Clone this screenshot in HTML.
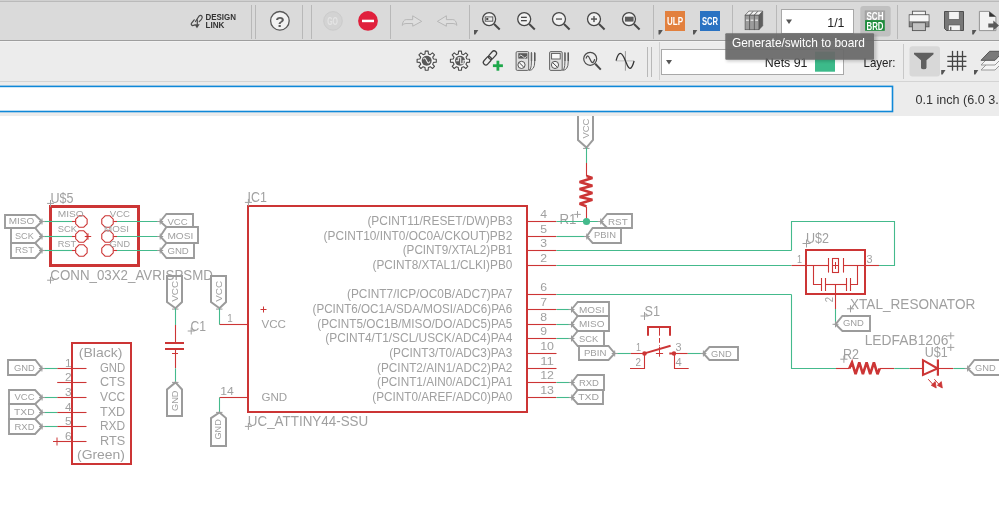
<!DOCTYPE html>
<html><head><meta charset="utf-8"><style>
html,body{margin:0;padding:0;width:999px;height:519px;overflow:hidden;background:#fff;font-family:"Liberation Sans",sans-serif}
svg{display:block;position:absolute;left:0;top:0}
</style></head><body>
<div style="position:absolute;left:0;top:0;width:999px;height:519px;will-change:transform">
<svg width="999" height="519" viewBox="0 0 999 519">
<rect x="0" y="0" width="999" height="519" fill="#fff"/>
<g font-family="&quot;Liberation Sans&quot;, sans-serif">
<rect x="50.5" y="206.5" width="88" height="59" fill="none" stroke="#cc3535" stroke-width="3"/>
<line x1="41.5" y1="221.5" x2="72" y2="221.5" stroke="#44ba8c" stroke-width="1.1" />
<line x1="72" y1="221.5" x2="75.5" y2="221.5" stroke="#cc3535" stroke-width="1.1" />
<polygon points="87.13,223.87 83.77,227.23 79.03,227.23 75.67,223.87 75.67,219.13 79.03,215.77 83.77,215.77 87.13,219.13" stroke="#cc3535" stroke-width="1.1" fill="none" />
<polygon points="113.23,223.87 109.87,227.23 105.13,227.23 101.77,223.87 101.77,219.13 105.13,215.77 109.87,215.77 113.23,219.13" stroke="#cc3535" stroke-width="1.1" fill="none" />
<line x1="113.5" y1="221.5" x2="117" y2="221.5" stroke="#cc3535" stroke-width="1.1" />
<line x1="117" y1="221.5" x2="161.5" y2="221.5" stroke="#44ba8c" stroke-width="1.1" />
<line x1="41.5" y1="236.5" x2="72" y2="236.5" stroke="#44ba8c" stroke-width="1.1" />
<line x1="72" y1="236.5" x2="75.5" y2="236.5" stroke="#cc3535" stroke-width="1.1" />
<polygon points="87.13,238.87 83.77,242.23 79.03,242.23 75.67,238.87 75.67,234.13 79.03,230.77 83.77,230.77 87.13,234.13" stroke="#cc3535" stroke-width="1.1" fill="none" />
<polygon points="113.23,238.87 109.87,242.23 105.13,242.23 101.77,238.87 101.77,234.13 105.13,230.77 109.87,230.77 113.23,234.13" stroke="#cc3535" stroke-width="1.1" fill="none" />
<line x1="113.5" y1="236.5" x2="117" y2="236.5" stroke="#cc3535" stroke-width="1.1" />
<line x1="117" y1="236.5" x2="161.5" y2="236.5" stroke="#44ba8c" stroke-width="1.1" />
<line x1="41.5" y1="250.5" x2="72" y2="250.5" stroke="#44ba8c" stroke-width="1.1" />
<line x1="72" y1="250.5" x2="75.5" y2="250.5" stroke="#cc3535" stroke-width="1.1" />
<polygon points="87.13,252.87 83.77,256.23 79.03,256.23 75.67,252.87 75.67,248.13 79.03,244.77 83.77,244.77 87.13,248.13" stroke="#cc3535" stroke-width="1.1" fill="none" />
<polygon points="113.23,252.87 109.87,256.23 105.13,256.23 101.77,252.87 101.77,248.13 105.13,244.77 109.87,244.77 113.23,248.13" stroke="#cc3535" stroke-width="1.1" fill="none" />
<line x1="113.5" y1="250.5" x2="117" y2="250.5" stroke="#cc3535" stroke-width="1.1" />
<line x1="117" y1="250.5" x2="161.5" y2="250.5" stroke="#44ba8c" stroke-width="1.1" />
<line x1="84.8" y1="236.5" x2="91.2" y2="236.5" stroke="#cc3535" stroke-width="1" />
<line x1="88" y1="233.3" x2="88" y2="239.7" stroke="#cc3535" stroke-width="1" />
<text x="57.8" y="217.1" font-size="9.6" fill="#a0a0a0" text-anchor="start" textLength="26" lengthAdjust="spacingAndGlyphs" >MISO</text>
<text x="57.7" y="231.8" font-size="9.6" fill="#a0a0a0" text-anchor="start" textLength="19.3" lengthAdjust="spacingAndGlyphs" >SCK</text>
<text x="57.7" y="246.9" font-size="9.6" fill="#a0a0a0" text-anchor="start" textLength="18.5" lengthAdjust="spacingAndGlyphs" >RST</text>
<text x="130" y="217.1" font-size="9.6" fill="#a0a0a0" text-anchor="end" textLength="20.2" lengthAdjust="spacingAndGlyphs" >VCC</text>
<text x="129.1" y="231.8" font-size="9.6" fill="#a0a0a0" text-anchor="end" textLength="25" lengthAdjust="spacingAndGlyphs" >MOSI</text>
<text x="130" y="246.9" font-size="9.6" fill="#a0a0a0" text-anchor="end" textLength="20.2" lengthAdjust="spacingAndGlyphs" >GND</text>
<text x="50.5" y="203.3" font-size="14.2" fill="#a0a0a0" text-anchor="start" textLength="23" lengthAdjust="spacingAndGlyphs" >U$5</text>
<line x1="47.1" y1="203.4" x2="53.9" y2="203.4" stroke="#a0a0a0" stroke-width="1" />
<line x1="50.5" y1="200.0" x2="50.5" y2="206.8" stroke="#a0a0a0" stroke-width="1" />
<text x="50.3" y="279.7" font-size="14.2" fill="#a0a0a0" text-anchor="start" textLength="162.6" lengthAdjust="spacingAndGlyphs" >CONN_03X2_AVRISPSMD</text>
<line x1="47.1" y1="280.2" x2="53.9" y2="280.2" stroke="#a0a0a0" stroke-width="1" />
<line x1="50.5" y1="276.8" x2="50.5" y2="283.59999999999997" stroke="#a0a0a0" stroke-width="1" />
<rect x="248" y="206" width="279" height="206" fill="none" stroke="#cc3535" stroke-width="2"/>
<text x="247.6" y="201.7" font-size="14.2" fill="#a0a0a0" text-anchor="start" textLength="19.3" lengthAdjust="spacingAndGlyphs" >IC1</text>
<line x1="244.9" y1="202.4" x2="251.9" y2="202.4" stroke="#a0a0a0" stroke-width="1" />
<line x1="248.4" y1="198.9" x2="248.4" y2="205.9" stroke="#a0a0a0" stroke-width="1" />
<text x="247.8" y="426.1" font-size="14.2" fill="#a0a0a0" text-anchor="start" textLength="120.4" lengthAdjust="spacingAndGlyphs" >UC_ATTINY44-SSU</text>
<line x1="244.9" y1="426.4" x2="251.9" y2="426.4" stroke="#a0a0a0" stroke-width="1" />
<line x1="248.4" y1="422.9" x2="248.4" y2="429.9" stroke="#a0a0a0" stroke-width="1" />
<text x="367.4" y="225.2" font-size="12" fill="#a0a0a0" text-anchor="start" textLength="144.9" lengthAdjust="spacingAndGlyphs" >(PCINT11/RESET/DW)PB3</text>
<line x1="528" y1="221.5" x2="556.5" y2="221.5" stroke="#cc3535" stroke-width="1.1" />
<text x="540.2" y="218.3" font-size="10.4" fill="#a0a0a0" text-anchor="start" textLength="6.8" lengthAdjust="spacingAndGlyphs" >4</text>
<text x="323.6" y="240.2" font-size="12" fill="#a0a0a0" text-anchor="start" textLength="188.7" lengthAdjust="spacingAndGlyphs" >(PCINT10/INT0/OC0A/CKOUT)PB2</text>
<line x1="528" y1="236.5" x2="556.5" y2="236.5" stroke="#cc3535" stroke-width="1.1" />
<text x="540.2" y="233.3" font-size="10.4" fill="#a0a0a0" text-anchor="start" textLength="6.8" lengthAdjust="spacingAndGlyphs" >5</text>
<text x="402.7" y="254.2" font-size="12" fill="#a0a0a0" text-anchor="start" textLength="109.6" lengthAdjust="spacingAndGlyphs" >(PCINT9/XTAL2)PB1</text>
<line x1="528" y1="250.5" x2="556.5" y2="250.5" stroke="#cc3535" stroke-width="1.1" />
<text x="540.2" y="247.3" font-size="10.4" fill="#a0a0a0" text-anchor="start" textLength="6.8" lengthAdjust="spacingAndGlyphs" >3</text>
<text x="372.5" y="269.2" font-size="12" fill="#a0a0a0" text-anchor="start" textLength="139.8" lengthAdjust="spacingAndGlyphs" >(PCINT8/XTAL1/CLKI)PB0</text>
<line x1="528" y1="265.5" x2="556.5" y2="265.5" stroke="#cc3535" stroke-width="1.1" />
<text x="540.2" y="262.3" font-size="10.4" fill="#a0a0a0" text-anchor="start" textLength="6.8" lengthAdjust="spacingAndGlyphs" >2</text>
<text x="347" y="298.2" font-size="12" fill="#a0a0a0" text-anchor="start" textLength="165.3" lengthAdjust="spacingAndGlyphs" >(PCINT7/ICP/OC0B/ADC7)PA7</text>
<line x1="528" y1="294.5" x2="556.5" y2="294.5" stroke="#cc3535" stroke-width="1.1" />
<text x="540.2" y="291.3" font-size="10.4" fill="#a0a0a0" text-anchor="start" textLength="6.8" lengthAdjust="spacingAndGlyphs" >6</text>
<text x="312.5" y="313.2" font-size="12" fill="#a0a0a0" text-anchor="start" textLength="199.8" lengthAdjust="spacingAndGlyphs" >(PCINT6/OC1A/SDA/MOSI/ADC6)PA6</text>
<line x1="528" y1="309.5" x2="556.5" y2="309.5" stroke="#cc3535" stroke-width="1.1" />
<text x="540.2" y="306.3" font-size="10.4" fill="#a0a0a0" text-anchor="start" textLength="6.8" lengthAdjust="spacingAndGlyphs" >7</text>
<text x="317.3" y="328.2" font-size="12" fill="#a0a0a0" text-anchor="start" textLength="195.0" lengthAdjust="spacingAndGlyphs" >(PCINT5/OC1B/MISO/DO/ADC5)PA5</text>
<line x1="528" y1="324.5" x2="556.5" y2="324.5" stroke="#cc3535" stroke-width="1.1" />
<text x="540.2" y="321.3" font-size="10.4" fill="#a0a0a0" text-anchor="start" textLength="6.8" lengthAdjust="spacingAndGlyphs" >8</text>
<text x="325.3" y="342.2" font-size="12" fill="#a0a0a0" text-anchor="start" textLength="187.0" lengthAdjust="spacingAndGlyphs" >(PCINT4/T1/SCL/USCK/ADC4)PA4</text>
<line x1="528" y1="338.5" x2="556.5" y2="338.5" stroke="#cc3535" stroke-width="1.1" />
<text x="540.2" y="335.3" font-size="10.4" fill="#a0a0a0" text-anchor="start" textLength="6.8" lengthAdjust="spacingAndGlyphs" >9</text>
<text x="389.2" y="357.2" font-size="12" fill="#a0a0a0" text-anchor="start" textLength="123.1" lengthAdjust="spacingAndGlyphs" >(PCINT3/T0/ADC3)PA3</text>
<line x1="528" y1="353.5" x2="556.5" y2="353.5" stroke="#cc3535" stroke-width="1.1" />
<text x="540.2" y="350.3" font-size="10.4" fill="#a0a0a0" text-anchor="start" textLength="13.8" lengthAdjust="spacingAndGlyphs" >10</text>
<text x="377.1" y="372.2" font-size="12" fill="#a0a0a0" text-anchor="start" textLength="135.2" lengthAdjust="spacingAndGlyphs" >(PCINT2/AIN1/ADC2)PA2</text>
<line x1="528" y1="368.5" x2="556.5" y2="368.5" stroke="#cc3535" stroke-width="1.1" />
<text x="540.2" y="365.3" font-size="10.4" fill="#a0a0a0" text-anchor="start" textLength="13.8" lengthAdjust="spacingAndGlyphs" >11</text>
<text x="377.1" y="386.2" font-size="12" fill="#a0a0a0" text-anchor="start" textLength="135.2" lengthAdjust="spacingAndGlyphs" >(PCINT1/AIN0/ADC1)PA1</text>
<line x1="528" y1="382.5" x2="556.5" y2="382.5" stroke="#cc3535" stroke-width="1.1" />
<text x="540.2" y="379.3" font-size="10.4" fill="#a0a0a0" text-anchor="start" textLength="13.8" lengthAdjust="spacingAndGlyphs" >12</text>
<text x="372.3" y="401.2" font-size="12" fill="#a0a0a0" text-anchor="start" textLength="140.0" lengthAdjust="spacingAndGlyphs" >(PCINT0/AREF/ADC0)PA0</text>
<line x1="528" y1="397.5" x2="556.5" y2="397.5" stroke="#cc3535" stroke-width="1.1" />
<text x="540.2" y="394.3" font-size="10.4" fill="#a0a0a0" text-anchor="start" textLength="13.8" lengthAdjust="spacingAndGlyphs" >13</text>
<line x1="219.5" y1="324.5" x2="247" y2="324.5" stroke="#cc3535" stroke-width="1.1" />
<text x="227.3" y="321.6" font-size="10.2" fill="#a0a0a0" text-anchor="start" textLength="5.5" lengthAdjust="spacingAndGlyphs" >1</text>
<line x1="219.5" y1="397.5" x2="247" y2="397.5" stroke="#cc3535" stroke-width="1.1" />
<text x="220.3" y="394.8" font-size="10.2" fill="#a0a0a0" text-anchor="start" textLength="13.5" lengthAdjust="spacingAndGlyphs" >14</text>
<text x="261.5" y="328.2" font-size="11.4" fill="#a0a0a0" text-anchor="start" textLength="24.5" lengthAdjust="spacingAndGlyphs" >VCC</text>
<line x1="260.5" y1="309.5" x2="266.5" y2="309.5" stroke="#cc3535" stroke-width="1" />
<line x1="263.5" y1="306.5" x2="263.5" y2="312.5" stroke="#cc3535" stroke-width="1" />
<text x="261.5" y="400.8" font-size="11.4" fill="#a0a0a0" text-anchor="start" textLength="25.7" lengthAdjust="spacingAndGlyphs" >GND</text>
<polygon points="167,276 182,276 182,302 175.5,308.3 167,302" stroke="#9b9b9b" stroke-width="2" fill="none" stroke-linejoin="miter"/>
<line x1="172.0" y1="309.1" x2="178.5" y2="309.1" stroke="#9b9b9b" stroke-width="1" />
<text transform="translate(177.9,301.7) rotate(-90)" font-size="9.8" fill="#a0a0a0" textLength="20.8" lengthAdjust="spacingAndGlyphs">VCC</text>
<line x1="175.5" y1="308.5" x2="175.5" y2="325" stroke="#44ba8c" stroke-width="1.1" />
<line x1="175.5" y1="325" x2="175.5" y2="343" stroke="#cc3535" stroke-width="1.1" />
<line x1="165" y1="343" x2="184" y2="343" stroke="#cc3535" stroke-width="2" />
<line x1="165" y1="349" x2="184" y2="349" stroke="#cc3535" stroke-width="2" />
<line x1="175.5" y1="349" x2="175.5" y2="368.3" stroke="#cc3535" stroke-width="1.1" />
<line x1="175.5" y1="368.3" x2="175.5" y2="382.5" stroke="#44ba8c" stroke-width="1.1" />
<line x1="172" y1="353.5" x2="178" y2="353.5" stroke="#cc3535" stroke-width="1" />
<text x="190.5" y="331.4" font-size="14.2" fill="#a0a0a0" text-anchor="start" textLength="15.5" lengthAdjust="spacingAndGlyphs" >C1</text>
<line x1="187.7" y1="331" x2="194.7" y2="331" stroke="#a0a0a0" stroke-width="1" />
<line x1="191.2" y1="327.5" x2="191.2" y2="334.5" stroke="#a0a0a0" stroke-width="1" />
<polygon points="175.5,382.4 182,389.5 182,416 167,416 167,389.5" stroke="#9b9b9b" stroke-width="2" fill="none" stroke-linejoin="miter"/>
<line x1="172.0" y1="382.4" x2="178.5" y2="382.4" stroke="#9b9b9b" stroke-width="1" />
<text transform="translate(177.5,411) rotate(-90)" font-size="9.8" fill="#a0a0a0" textLength="20.5" lengthAdjust="spacingAndGlyphs">GND</text>
<polygon points="211,276 226,276 226,302 219.5,308.3 211,302" stroke="#9b9b9b" stroke-width="2" fill="none" stroke-linejoin="miter"/>
<line x1="216.0" y1="309.1" x2="222.5" y2="309.1" stroke="#9b9b9b" stroke-width="1" />
<text transform="translate(222.2,301.8) rotate(-90)" font-size="9.8" fill="#a0a0a0" textLength="21" lengthAdjust="spacingAndGlyphs">VCC</text>
<line x1="219.5" y1="308.5" x2="219.5" y2="324.5" stroke="#44ba8c" stroke-width="1.1" />
<line x1="219.5" y1="397.5" x2="219.5" y2="412.4" stroke="#44ba8c" stroke-width="1.1" />
<polygon points="219.5,412.4 226,418.1 226,446 211,446 211,418.1" stroke="#9b9b9b" stroke-width="2" fill="none" stroke-linejoin="miter"/>
<line x1="216.0" y1="412.4" x2="222.5" y2="412.4" stroke="#9b9b9b" stroke-width="1" />
<text transform="translate(221.2,439.5) rotate(-90)" font-size="9.8" fill="#a0a0a0" textLength="20.2" lengthAdjust="spacingAndGlyphs">GND</text>
<rect x="72" y="343" width="59" height="121" fill="none" stroke="#cc3535" stroke-width="2"/>
<line x1="57.2" y1="368.5" x2="86.5" y2="368.5" stroke="#cc3535" stroke-width="1.1" />
<text x="65" y="366.7" font-size="11.4" fill="#a0a0a0" text-anchor="start" textLength="6.6" lengthAdjust="spacingAndGlyphs" >1</text>
<text x="125.2" y="371.8" font-size="12.75" fill="#a0a0a0" text-anchor="end" textLength="25.2" lengthAdjust="spacingAndGlyphs" >GND</text>
<line x1="57.2" y1="382.5" x2="86.5" y2="382.5" stroke="#cc3535" stroke-width="1.1" />
<text x="65" y="380.7" font-size="11.4" fill="#a0a0a0" text-anchor="start" textLength="6.6" lengthAdjust="spacingAndGlyphs" >2</text>
<text x="125.2" y="385.8" font-size="12.75" fill="#a0a0a0" text-anchor="end" textLength="25.2" lengthAdjust="spacingAndGlyphs" >CTS</text>
<line x1="57.2" y1="397.5" x2="86.5" y2="397.5" stroke="#cc3535" stroke-width="1.1" />
<text x="65" y="395.7" font-size="11.4" fill="#a0a0a0" text-anchor="start" textLength="6.6" lengthAdjust="spacingAndGlyphs" >3</text>
<text x="125.2" y="400.8" font-size="12.75" fill="#a0a0a0" text-anchor="end" textLength="25.2" lengthAdjust="spacingAndGlyphs" >VCC</text>
<line x1="57.2" y1="412.5" x2="86.5" y2="412.5" stroke="#cc3535" stroke-width="1.1" />
<text x="65" y="410.7" font-size="11.4" fill="#a0a0a0" text-anchor="start" textLength="6.6" lengthAdjust="spacingAndGlyphs" >4</text>
<text x="125.2" y="415.8" font-size="12.75" fill="#a0a0a0" text-anchor="end" textLength="25.2" lengthAdjust="spacingAndGlyphs" >TXD</text>
<line x1="57.2" y1="426.5" x2="86.5" y2="426.5" stroke="#cc3535" stroke-width="1.1" />
<text x="65" y="424.7" font-size="11.4" fill="#a0a0a0" text-anchor="start" textLength="6.6" lengthAdjust="spacingAndGlyphs" >5</text>
<text x="125.2" y="429.8" font-size="12.75" fill="#a0a0a0" text-anchor="end" textLength="25.2" lengthAdjust="spacingAndGlyphs" >RXD</text>
<line x1="57.2" y1="441.5" x2="86.5" y2="441.5" stroke="#cc3535" stroke-width="1.1" />
<text x="65" y="439.7" font-size="11.4" fill="#a0a0a0" text-anchor="start" textLength="6.6" lengthAdjust="spacingAndGlyphs" >6</text>
<text x="125.2" y="444.8" font-size="12.75" fill="#a0a0a0" text-anchor="end" textLength="25.2" lengthAdjust="spacingAndGlyphs" >RTS</text>
<line x1="53" y1="441.5" x2="61" y2="441.5" stroke="#cc3535" stroke-width="1" />
<line x1="57" y1="437.5" x2="57" y2="445.5" stroke="#cc3535" stroke-width="1" />
<text x="78.8" y="357.3" font-size="12.75" fill="#a0a0a0" text-anchor="start" textLength="43.5" lengthAdjust="spacingAndGlyphs" >(Black)</text>
<text x="77" y="459.3" font-size="12.75" fill="#a0a0a0" text-anchor="start" textLength="48" lengthAdjust="spacingAndGlyphs" >(Green)</text>
<line x1="41.6" y1="368.5" x2="57.2" y2="368.5" stroke="#44ba8c" stroke-width="1.1" />
<line x1="41.6" y1="397.5" x2="57.2" y2="397.5" stroke="#44ba8c" stroke-width="1.1" />
<line x1="41.6" y1="412.5" x2="57.2" y2="412.5" stroke="#44ba8c" stroke-width="1.1" />
<line x1="41.6" y1="426.5" x2="57.2" y2="426.5" stroke="#44ba8c" stroke-width="1.1" />
<polygon points="578,110 593,110 593,140 586.5,147.6 578,140" stroke="#9b9b9b" stroke-width="2" fill="none" stroke-linejoin="miter"/>
<line x1="583.0" y1="148.4" x2="589.5" y2="148.4" stroke="#9b9b9b" stroke-width="1" />
<text transform="translate(588.9,138.6) rotate(-90)" font-size="9.8" fill="#a0a0a0" textLength="19.9" lengthAdjust="spacingAndGlyphs">VCC</text>
<line x1="586.5" y1="147.8" x2="586.5" y2="163" stroke="#44ba8c" stroke-width="1.1" />
<line x1="586.5" y1="163" x2="586.5" y2="176" stroke="#cc3535" stroke-width="1.1" />
<polyline points="586.5,176 592.4,177.9 579.6,181.9 592.4,185.8 579.6,189 592.4,192.9 579.6,196.9 592.4,199.8 579.6,203.8 586.5,206.4" stroke="#cc3535" stroke-width="2.6" fill="none" stroke-linejoin="miter" stroke-miterlimit="3"/>
<line x1="586.5" y1="206.6" x2="586.5" y2="221.5" stroke="#cc3535" stroke-width="1.1" />
<circle cx="586.5" cy="221.5" r="3.6" fill="#44ba8c"/>
<text x="559.5" y="224.2" font-size="14.2" fill="#a0a0a0" text-anchor="start" textLength="17" lengthAdjust="spacingAndGlyphs" >R1</text>
<line x1="574.2" y1="214.4" x2="580.8" y2="214.4" stroke="#a0a0a0" stroke-width="1" />
<line x1="577.5" y1="211.1" x2="577.5" y2="217.70000000000002" stroke="#a0a0a0" stroke-width="1" />
<line x1="556.5" y1="221.5" x2="600.5" y2="221.5" stroke="#44ba8c" stroke-width="1.1" />
<line x1="556.5" y1="236.5" x2="586.3" y2="236.5" stroke="#44ba8c" stroke-width="1.1" />
<line x1="556.5" y1="250.5" x2="791.5" y2="250.5" stroke="#44ba8c" stroke-width="1.1" />
<polyline points="791.5,250.5 791.5,221.5 894.5,221.5 894.5,265.5 879,265.5" stroke="#44ba8c" stroke-width="1.1" fill="none" />
<line x1="556.5" y1="265.5" x2="791.5" y2="265.5" stroke="#44ba8c" stroke-width="1.1" />
<line x1="556.5" y1="294.5" x2="791.5" y2="294.5" stroke="#44ba8c" stroke-width="1.1" />
<polyline points="791.5,294.5 791.5,368.5 836,368.5" stroke="#44ba8c" stroke-width="1.1" fill="none" />
<line x1="556.5" y1="309.5" x2="571.3" y2="309.5" stroke="#44ba8c" stroke-width="1.1" />
<line x1="556.5" y1="324.5" x2="571.3" y2="324.5" stroke="#44ba8c" stroke-width="1.1" />
<line x1="556.5" y1="338.5" x2="571.3" y2="338.5" stroke="#44ba8c" stroke-width="1.1" />
<line x1="556.5" y1="382.5" x2="571.3" y2="382.5" stroke="#44ba8c" stroke-width="1.1" />
<line x1="556.5" y1="397.5" x2="571.3" y2="397.5" stroke="#44ba8c" stroke-width="1.1" />
<line x1="615.2" y1="353.5" x2="630.8" y2="353.5" stroke="#44ba8c" stroke-width="1.1" />
<line x1="630.8" y1="353.5" x2="644.5" y2="353.5" stroke="#cc3535" stroke-width="1.1" />
<circle cx="644.5" cy="353.5" r="2.3" fill="#cc3535"/>
<line x1="644.5" y1="353.4" x2="670.6" y2="345.8" stroke="#cc3535" stroke-width="2" />
<line x1="669.3" y1="353.5" x2="674" y2="353.5" stroke="#cc3535" stroke-width="2" />
<circle cx="674" cy="353.5" r="2.2" fill="#cc3535"/>
<line x1="674" y1="353.5" x2="687.8" y2="353.5" stroke="#cc3535" stroke-width="1.1" />
<line x1="687.8" y1="353.5" x2="703.4" y2="353.5" stroke="#44ba8c" stroke-width="1.1" />
<polyline points="644.5,353.5 644.5,368.5 630,368.5" stroke="#cc3535" stroke-width="1.1" fill="none" />
<polyline points="674.5,353.5 674.5,368.5 688.7,368.5" stroke="#cc3535" stroke-width="1.1" fill="none" />
<polyline points="648,335.7 648,327 670,327 670,335.7" stroke="#cc3535" stroke-width="2" fill="none" />
<line x1="659.5" y1="327" x2="659.5" y2="346" stroke="#cc3535" stroke-width="1" stroke-dasharray="8.7,2.3,4.8,2.5,4.8,2.5"/>
<line x1="659.5" y1="346.6" x2="659.5" y2="356.7" stroke="#cc3535" stroke-width="1" />
<line x1="655.9" y1="353.5" x2="663.1" y2="353.5" stroke="#cc3535" stroke-width="1" />
<text x="636" y="350.8" font-size="10.2" fill="#a0a0a0" text-anchor="start" textLength="5" lengthAdjust="spacingAndGlyphs" >1</text>
<text x="675.5" y="350.8" font-size="10.2" fill="#a0a0a0" text-anchor="start" textLength="6" lengthAdjust="spacingAndGlyphs" >3</text>
<text x="635.5" y="365.6" font-size="10.2" fill="#a0a0a0" text-anchor="start" textLength="5.5" lengthAdjust="spacingAndGlyphs" >2</text>
<text x="675.5" y="365.6" font-size="10.2" fill="#a0a0a0" text-anchor="start" textLength="6.2" lengthAdjust="spacingAndGlyphs" >4</text>
<text x="644.5" y="316.3" font-size="14.2" fill="#a0a0a0" text-anchor="start" textLength="15.5" lengthAdjust="spacingAndGlyphs" >S1</text>
<line x1="640.5" y1="316" x2="648.5" y2="316" stroke="#a0a0a0" stroke-width="1" />
<line x1="644.5" y1="312" x2="644.5" y2="320" stroke="#a0a0a0" stroke-width="1" />
<rect x="806" y="250" width="59" height="44" fill="none" stroke="#cc3535" stroke-width="2"/>
<line x1="791.5" y1="265.5" x2="806" y2="265.5" stroke="#cc3535" stroke-width="1.1" />
<line x1="865" y1="265.5" x2="879" y2="265.5" stroke="#cc3535" stroke-width="1.1" />
<line x1="806" y1="265.5" x2="828.5" y2="265.5" stroke="#cc3535" stroke-width="1.1" />
<line x1="843.5" y1="265.5" x2="865" y2="265.5" stroke="#cc3535" stroke-width="1.1" />
<line x1="828.5" y1="258" x2="828.5" y2="272.6" stroke="#cc3535" stroke-width="1.1" />
<line x1="843.5" y1="258" x2="843.5" y2="272.6" stroke="#cc3535" stroke-width="1.1" />
<rect x="832.5" y="258.5" width="6" height="14" fill="none" stroke="#cc3535" stroke-width="1.1"/>
<line x1="835.5" y1="262" x2="835.5" y2="269" stroke="#cc3535" stroke-width="1" />
<line x1="832.5" y1="265.5" x2="838.5" y2="265.5" stroke="#cc3535" stroke-width="1" />
<polyline points="813.5,265.5 813.5,284.5 821.5,284.5" stroke="#cc3535" stroke-width="1.1" fill="none" />
<line x1="821.5" y1="278" x2="821.5" y2="291" stroke="#cc3535" stroke-width="1.1" />
<line x1="825.5" y1="278" x2="825.5" y2="291" stroke="#cc3535" stroke-width="1.1" />
<line x1="825.5" y1="284.5" x2="846.5" y2="284.5" stroke="#cc3535" stroke-width="1.1" />
<line x1="846.5" y1="278" x2="846.5" y2="291" stroke="#cc3535" stroke-width="1.1" />
<line x1="850.5" y1="278" x2="850.5" y2="291" stroke="#cc3535" stroke-width="1.1" />
<polyline points="850.5,284.5 857.5,284.5 857.5,265.5" stroke="#cc3535" stroke-width="1.1" fill="none" />
<line x1="835.5" y1="284.5" x2="835.5" y2="309" stroke="#cc3535" stroke-width="1.1" />
<line x1="835.5" y1="309" x2="835.5" y2="324.3" stroke="#44ba8c" stroke-width="1.1" />
<text x="797" y="262.6" font-size="10.2" fill="#a0a0a0" text-anchor="start" textLength="5" lengthAdjust="spacingAndGlyphs" >1</text>
<text x="866.5" y="262.6" font-size="10.2" fill="#a0a0a0" text-anchor="start" textLength="6" lengthAdjust="spacingAndGlyphs" >3</text>
<text transform="translate(833,302.3) rotate(-90)" font-size="10.2" fill="#a0a0a0" textLength="5.3" lengthAdjust="spacingAndGlyphs">2</text>
<text x="806" y="242.8" font-size="14.2" fill="#a0a0a0" text-anchor="start" textLength="23" lengthAdjust="spacingAndGlyphs" >U$2</text>
<line x1="802.5" y1="243.5" x2="810.5" y2="243.5" stroke="#a0a0a0" stroke-width="1" />
<line x1="806.5" y1="239.5" x2="806.5" y2="247.5" stroke="#a0a0a0" stroke-width="1" />
<text x="850" y="309.2" font-size="14.2" fill="#a0a0a0" text-anchor="start" textLength="125.3" lengthAdjust="spacingAndGlyphs" >XTAL_RESONATOR</text>
<line x1="847.0" y1="308.8" x2="854.0" y2="308.8" stroke="#a0a0a0" stroke-width="1" />
<line x1="850.5" y1="305.3" x2="850.5" y2="312.3" stroke="#a0a0a0" stroke-width="1" />
<line x1="836" y1="368.5" x2="849.5" y2="368.5" stroke="#cc3535" stroke-width="1.1" />
<polyline points="849.3,368.5 852,362.4 855.6,374.2 859.3,362.4 862.9,374.2 866.6,362.4 870.2,374.2 873.9,362.4 877.5,374.2 879.7,368.5" stroke="#cc3535" stroke-width="2.6" fill="none" stroke-linejoin="miter" stroke-miterlimit="3"/>
<line x1="879.7" y1="368.5" x2="894.3" y2="368.5" stroke="#cc3535" stroke-width="1.1" />
<line x1="894.3" y1="368.5" x2="909.5" y2="368.5" stroke="#44ba8c" stroke-width="1.1" />
<line x1="909.5" y1="368.5" x2="923" y2="368.5" stroke="#cc3535" stroke-width="1.1" />
<polygon points="923,360.2 923,375 937.6,368.5" stroke="#cc3535" stroke-width="2.1" fill="none" stroke-linejoin="miter"/>
<line x1="937.9" y1="359.4" x2="937.9" y2="375.7" stroke="#cc3535" stroke-width="2.2" />
<line x1="937.4" y1="368.5" x2="953.5" y2="368.5" stroke="#cc3535" stroke-width="1.1" />
<line x1="953.5" y1="368.5" x2="968" y2="368.5" stroke="#44ba8c" stroke-width="1.1" />
<line x1="928.2" y1="379.2" x2="934" y2="385.6" stroke="#cc3535" stroke-width="1" />
<polygon points="936.2,388 931.3,385.3 935.2,381.6" stroke="#cc3535" stroke-width="0.8" fill="#cc3535" />
<line x1="934.3000000000001" y1="379.2" x2="940.1" y2="385.6" stroke="#cc3535" stroke-width="1" />
<polygon points="942.3000000000001,388 937.4,385.3 941.3000000000001,381.6" stroke="#cc3535" stroke-width="0.8" fill="#cc3535" />
<text x="843" y="358.8" font-size="14.2" fill="#a0a0a0" text-anchor="start" textLength="16" lengthAdjust="spacingAndGlyphs" >R2</text>
<line x1="840.3" y1="359.2" x2="847.5" y2="359.2" stroke="#a0a0a0" stroke-width="1" />
<line x1="843.9" y1="355.59999999999997" x2="843.9" y2="362.8" stroke="#a0a0a0" stroke-width="1" />
<text x="924.8" y="357" font-size="14.2" fill="#a0a0a0" text-anchor="start" textLength="23" lengthAdjust="spacingAndGlyphs" >U$1</text>
<line x1="947.3" y1="347.4" x2="954.3" y2="347.4" stroke="#a0a0a0" stroke-width="1" />
<line x1="950.8" y1="343.9" x2="950.8" y2="350.9" stroke="#a0a0a0" stroke-width="1" />
<text x="864.7" y="344.9" font-size="14.2" fill="#a0a0a0" text-anchor="start" textLength="83.7" lengthAdjust="spacingAndGlyphs" >LEDFAB1206</text>
<line x1="947.3" y1="335.8" x2="954.3" y2="335.8" stroke="#a0a0a0" stroke-width="1" />
<line x1="950.8" y1="332.3" x2="950.8" y2="339.3" stroke="#a0a0a0" stroke-width="1" />
<polygon points="160.2,221.5 166.4,214 193,214 193,227 166.4,227 160.2,221.5" stroke="#9b9b9b" stroke-width="1.9" fill="none" stroke-linejoin="miter"/>
<line x1="157.2" y1="221.5" x2="163.2" y2="221.5" stroke="#9b9b9b" stroke-width="1" />
<line x1="160.2" y1="218.5" x2="160.2" y2="224.5" stroke="#9b9b9b" stroke-width="1" />
<text x="167.4" y="224.6" font-size="9" fill="#a0a0a0" text-anchor="start" textLength="20.3" lengthAdjust="spacingAndGlyphs" >VCC</text>
<polygon points="160.2,236.5 166.4,227 198,227 198,243 166.4,243 160.2,236.5" stroke="#9b9b9b" stroke-width="1.9" fill="none" stroke-linejoin="miter"/>
<line x1="157.2" y1="236.5" x2="163.2" y2="236.5" stroke="#9b9b9b" stroke-width="1" />
<line x1="160.2" y1="233.5" x2="160.2" y2="239.5" stroke="#9b9b9b" stroke-width="1" />
<text x="167.4" y="239" font-size="9" fill="#a0a0a0" text-anchor="start" textLength="25.9" lengthAdjust="spacingAndGlyphs" >MOSI</text>
<polygon points="160.2,250.5 166.4,243 194,243 194,258 166.4,258 160.2,250.5" stroke="#9b9b9b" stroke-width="1.9" fill="none" stroke-linejoin="miter"/>
<line x1="157.2" y1="250.5" x2="163.2" y2="250.5" stroke="#9b9b9b" stroke-width="1" />
<line x1="160.2" y1="247.5" x2="160.2" y2="253.5" stroke="#9b9b9b" stroke-width="1" />
<text x="167.4" y="253.8" font-size="9" fill="#a0a0a0" text-anchor="start" textLength="21.4" lengthAdjust="spacingAndGlyphs" >GND</text>
<polygon points="600.7,221.5 607.2,214 632,214 632,228 607.2,228 600.7,221.5" stroke="#9b9b9b" stroke-width="1.9" fill="none" stroke-linejoin="miter"/>
<line x1="597.7" y1="221.5" x2="603.7" y2="221.5" stroke="#9b9b9b" stroke-width="1" />
<line x1="600.7" y1="218.5" x2="600.7" y2="224.5" stroke="#9b9b9b" stroke-width="1" />
<text x="608" y="224.5" font-size="9" fill="#a0a0a0" text-anchor="start" textLength="19.7" lengthAdjust="spacingAndGlyphs" >RST</text>
<polygon points="586.75,236.5 592.6,228 621,228 621,243 592.6,243 586.75,236.5" stroke="#9b9b9b" stroke-width="1.9" fill="none" stroke-linejoin="miter"/>
<line x1="583.75" y1="236.5" x2="589.75" y2="236.5" stroke="#9b9b9b" stroke-width="1" />
<line x1="586.75" y1="233.5" x2="586.75" y2="239.5" stroke="#9b9b9b" stroke-width="1" />
<text x="594.1" y="238.4" font-size="9" fill="#a0a0a0" text-anchor="start" textLength="21.9" lengthAdjust="spacingAndGlyphs" >PBIN</text>
<polygon points="571.5,309.5 577.7,302 609,302 609,316 577.7,316 571.5,309.5" stroke="#9b9b9b" stroke-width="1.9" fill="none" stroke-linejoin="miter"/>
<line x1="568.5" y1="309.5" x2="574.5" y2="309.5" stroke="#9b9b9b" stroke-width="1" />
<line x1="571.5" y1="306.5" x2="571.5" y2="312.5" stroke="#9b9b9b" stroke-width="1" />
<text x="579" y="312.8" font-size="9" fill="#a0a0a0" text-anchor="start" textLength="25.5" lengthAdjust="spacingAndGlyphs" >MOSI</text>
<polygon points="571.5,324.5 577.7,316 609,316 609,331 577.7,331 571.5,324.5" stroke="#9b9b9b" stroke-width="1.9" fill="none" stroke-linejoin="miter"/>
<line x1="568.5" y1="324.5" x2="574.5" y2="324.5" stroke="#9b9b9b" stroke-width="1" />
<line x1="571.5" y1="321.5" x2="571.5" y2="327.5" stroke="#9b9b9b" stroke-width="1" />
<text x="579" y="327" font-size="9" fill="#a0a0a0" text-anchor="start" textLength="25.5" lengthAdjust="spacingAndGlyphs" >MISO</text>
<polygon points="571.5,338.5 577.7,331 604,331 604,346 577.7,346 571.5,338.5" stroke="#9b9b9b" stroke-width="1.9" fill="none" stroke-linejoin="miter"/>
<line x1="568.5" y1="338.5" x2="574.5" y2="338.5" stroke="#9b9b9b" stroke-width="1" />
<line x1="571.5" y1="335.5" x2="571.5" y2="341.5" stroke="#9b9b9b" stroke-width="1" />
<text x="579" y="341.8" font-size="9" fill="#a0a0a0" text-anchor="start" textLength="19.3" lengthAdjust="spacingAndGlyphs" >SCK</text>
<polygon points="571.8,382.5 577.6,375 604,375 604,390 577.6,390 571.8,382.5" stroke="#9b9b9b" stroke-width="1.9" fill="none" stroke-linejoin="miter"/>
<line x1="568.8" y1="382.5" x2="574.8" y2="382.5" stroke="#9b9b9b" stroke-width="1" />
<line x1="571.8" y1="379.5" x2="571.8" y2="385.5" stroke="#9b9b9b" stroke-width="1" />
<text x="578.9" y="385.8" font-size="9" fill="#a0a0a0" text-anchor="start" textLength="20.1" lengthAdjust="spacingAndGlyphs" >RXD</text>
<polygon points="571.8,397.5 577.6,390 603,390 603,404 577.6,404 571.8,397.5" stroke="#9b9b9b" stroke-width="1.9" fill="none" stroke-linejoin="miter"/>
<line x1="568.8" y1="397.5" x2="574.8" y2="397.5" stroke="#9b9b9b" stroke-width="1" />
<line x1="571.8" y1="394.5" x2="571.8" y2="400.5" stroke="#9b9b9b" stroke-width="1" />
<text x="578.2" y="400.4" font-size="9" fill="#a0a0a0" text-anchor="start" textLength="20.8" lengthAdjust="spacingAndGlyphs" >TXD</text>
<polygon points="703.4,353.5 709.4,347 738,347 738,360 709.4,360 703.4,353.5" stroke="#9b9b9b" stroke-width="1.9" fill="none" stroke-linejoin="miter"/>
<line x1="700.4" y1="353.5" x2="706.4" y2="353.5" stroke="#9b9b9b" stroke-width="1" />
<line x1="703.4" y1="350.5" x2="703.4" y2="356.5" stroke="#9b9b9b" stroke-width="1" />
<text x="711" y="356.7" font-size="9" fill="#a0a0a0" text-anchor="start" textLength="20.7" lengthAdjust="spacingAndGlyphs" >GND</text>
<polygon points="835.5,324.3 842.4,316 870,316 870,331 842.4,331 835.5,324.3" stroke="#9b9b9b" stroke-width="1.9" fill="none" stroke-linejoin="miter"/>
<line x1="832.5" y1="324.3" x2="838.5" y2="324.3" stroke="#9b9b9b" stroke-width="1" />
<line x1="835.5" y1="321.3" x2="835.5" y2="327.3" stroke="#9b9b9b" stroke-width="1" />
<text x="842.9" y="326.45" font-size="9" fill="#a0a0a0" text-anchor="start" textLength="21.0" lengthAdjust="spacingAndGlyphs" >GND</text>
<polygon points="967.6,368.5 974.4,360 1010,360 1010,375 974.4,375 967.6,368.5" stroke="#9b9b9b" stroke-width="1.9" fill="none" stroke-linejoin="miter"/>
<line x1="964.6" y1="368.5" x2="970.6" y2="368.5" stroke="#9b9b9b" stroke-width="1" />
<line x1="967.6" y1="365.5" x2="967.6" y2="371.5" stroke="#9b9b9b" stroke-width="1" />
<text x="975" y="370.8" font-size="9" fill="#a0a0a0" text-anchor="start" textLength="20.7" lengthAdjust="spacingAndGlyphs" >GND</text>
<polygon points="5,215 35.2,215 42,221.5 35.2,228 5,228" stroke="#9b9b9b" stroke-width="1.9" fill="none" stroke-linejoin="miter"/>
<line x1="39" y1="221.5" x2="45" y2="221.5" stroke="#9b9b9b" stroke-width="1" />
<line x1="42" y1="218.5" x2="42" y2="224.5" stroke="#9b9b9b" stroke-width="1" />
<text x="8.7" y="223.6" font-size="9" fill="#a0a0a0" text-anchor="start" textLength="25.5" lengthAdjust="spacingAndGlyphs" >MISO</text>
<polygon points="11,228 35.2,228 42,236.5 35.2,243 11,243" stroke="#9b9b9b" stroke-width="1.9" fill="none" stroke-linejoin="miter"/>
<line x1="39" y1="236.5" x2="45" y2="236.5" stroke="#9b9b9b" stroke-width="1" />
<line x1="42" y1="233.5" x2="42" y2="239.5" stroke="#9b9b9b" stroke-width="1" />
<text x="15" y="238.6" font-size="9" fill="#a0a0a0" text-anchor="start" textLength="18.8" lengthAdjust="spacingAndGlyphs" >SCK</text>
<polygon points="11,243 35.2,243 42,250.5 35.2,258 11,258" stroke="#9b9b9b" stroke-width="1.9" fill="none" stroke-linejoin="miter"/>
<line x1="39" y1="250.5" x2="45" y2="250.5" stroke="#9b9b9b" stroke-width="1" />
<line x1="42" y1="247.5" x2="42" y2="253.5" stroke="#9b9b9b" stroke-width="1" />
<text x="15" y="253.3" font-size="9" fill="#a0a0a0" text-anchor="start" textLength="19" lengthAdjust="spacingAndGlyphs" >RST</text>
<polygon points="579,346 608.5,346 614.7,353.5 608.5,360 579,360" stroke="#9b9b9b" stroke-width="1.9" fill="none" stroke-linejoin="miter"/>
<line x1="611.7" y1="353.5" x2="617.7" y2="353.5" stroke="#9b9b9b" stroke-width="1" />
<line x1="614.7" y1="350.5" x2="614.7" y2="356.5" stroke="#9b9b9b" stroke-width="1" />
<text x="583.9" y="356" font-size="9" fill="#a0a0a0" text-anchor="start" textLength="22.5" lengthAdjust="spacingAndGlyphs" >PBIN</text>
<polygon points="8,360 35.4,360 41.9,368.5 35.4,375 8,375" stroke="#9b9b9b" stroke-width="1.9" fill="none" stroke-linejoin="miter"/>
<line x1="38.9" y1="368.5" x2="44.9" y2="368.5" stroke="#9b9b9b" stroke-width="1" />
<line x1="41.9" y1="365.5" x2="41.9" y2="371.5" stroke="#9b9b9b" stroke-width="1" />
<text x="13.9" y="370.8" font-size="9" fill="#a0a0a0" text-anchor="start" textLength="20.8" lengthAdjust="spacingAndGlyphs" >GND</text>
<polygon points="9,390 35.1,390 42.1,397.5 35.1,404 9,404" stroke="#9b9b9b" stroke-width="1.9" fill="none" stroke-linejoin="miter"/>
<line x1="39.1" y1="397.5" x2="45.1" y2="397.5" stroke="#9b9b9b" stroke-width="1" />
<line x1="42.1" y1="394.5" x2="42.1" y2="400.5" stroke="#9b9b9b" stroke-width="1" />
<text x="14.5" y="399.6" font-size="9" fill="#a0a0a0" text-anchor="start" textLength="20.1" lengthAdjust="spacingAndGlyphs" >VCC</text>
<polygon points="9,404 35.1,404 42.1,412.5 35.1,419 9,419" stroke="#9b9b9b" stroke-width="1.9" fill="none" stroke-linejoin="miter"/>
<line x1="39.1" y1="412.5" x2="45.1" y2="412.5" stroke="#9b9b9b" stroke-width="1" />
<line x1="42.1" y1="409.5" x2="42.1" y2="415.5" stroke="#9b9b9b" stroke-width="1" />
<text x="14" y="414.6" font-size="9" fill="#a0a0a0" text-anchor="start" textLength="20.6" lengthAdjust="spacingAndGlyphs" >TXD</text>
<polygon points="9,419 35.1,419 42.1,426.5 35.1,434 9,434" stroke="#9b9b9b" stroke-width="1.9" fill="none" stroke-linejoin="miter"/>
<line x1="39.1" y1="426.5" x2="45.1" y2="426.5" stroke="#9b9b9b" stroke-width="1" />
<line x1="42.1" y1="423.5" x2="42.1" y2="429.5" stroke="#9b9b9b" stroke-width="1" />
<text x="14.5" y="429.6" font-size="9" fill="#a0a0a0" text-anchor="start" textLength="20.1" lengthAdjust="spacingAndGlyphs" >RXD</text>
</g>
<rect x="0" y="0" width="999" height="1" fill="#d0d0d0"/>
<rect x="0" y="1" width="999" height="1" fill="#bababa"/>
<rect x="0" y="2" width="999" height="38" fill="#dadada"/>
<rect x="0" y="40" width="999" height="1" fill="#9e9e9e"/>
<rect x="0" y="41" width="999" height="40" fill="#ececec"/>
<rect x="0" y="41" width="999" height="1" fill="#f2f2f2"/>
<rect x="0" y="81" width="999" height="1" fill="#d4d4d4"/>
<rect x="0" y="82" width="999" height="34" fill="#ececec"/>
<rect x="-2" y="86.4" width="894.5" height="25.1" fill="#fff" stroke="#0f88d8" stroke-width="1.6"/>
<text x="915.5" y="104" font-family="&quot;Liberation Sans&quot;, sans-serif" font-size="12.6" fill="#333">0.1 inch (6.0 3.</text>
<g fill="none" stroke="#4a4a4a" stroke-width="1.2" stroke-linecap="round"><path d="M195.5,21.5 L199,16.2 Q200.6,14.6 202,16.4 Q202.8,17.8 201.2,19.6 L199.2,21.6"/><path d="M194.2,19.8 L191.6,23 Q190.6,24.8 192.4,25.6 L194.6,25.2"/><path d="M197.3,19.8 V24.3"/></g>
<polygon points="194.3,24.3 199.7,24.3 197,28.2" fill="#4a4a4a"/>
<text x="205.5" y="20" font-family="&quot;Liberation Sans&quot;, sans-serif" font-size="8.6" font-weight="bold" fill="#333" textLength="30.5" lengthAdjust="spacingAndGlyphs">DESIGN</text>
<text x="205.5" y="27.5" font-family="&quot;Liberation Sans&quot;, sans-serif" font-size="8.6" font-weight="bold" fill="#333" textLength="19" lengthAdjust="spacingAndGlyphs">LINK</text>
<rect x="251" y="5" width="1" height="34" fill="#b8b8b8"/>
<rect x="255" y="5" width="1" height="34" fill="#b8b8b8"/>
<circle cx="279.9" cy="20.8" r="9.3" fill="#f2f2f2" stroke="#585858" stroke-width="1.3"/>
<text x="280" y="26.7" text-anchor="middle" font-family="&quot;Liberation Sans&quot;, sans-serif" font-size="15.5" font-weight="bold" fill="#5c5c5c">?</text>
<rect x="302" y="5" width="1" height="34" fill="#b8b8b8"/>
<rect x="311" y="5" width="1" height="34" fill="#b8b8b8"/>
<circle cx="333" cy="20.9" r="9.3" fill="#d3d3d3" stroke="#cbcbcb" stroke-width="1"/>
<text x="332.6" y="24.6" text-anchor="middle" font-family="&quot;Liberation Sans&quot;, sans-serif" font-size="10" font-weight="bold" fill="#e4e4e4" textLength="10.8" lengthAdjust="spacingAndGlyphs">GO</text>
<circle cx="368" cy="20.9" r="9.9" fill="#e0203c"/>
<rect x="362" y="19.7" width="12" height="2.5" fill="#fff"/>
<rect x="390" y="5" width="1" height="34" fill="#b8b8b8"/>
<path id="redo" d="M402.2,25.4 Q403,19.6 406.3,19.6 H412.7 V15.8 L421.7,21.4 L412.7,26.2 V23.5 H406 Q403.5,23.5 402.2,25.4 Z" fill="#dedede" stroke="#b2b2b2" stroke-width="0.9" stroke-linejoin="round"/>
<path transform="translate(859.1,0) scale(-1,1)" d="M402.2,25.4 Q403,19.6 406.3,19.6 H412.7 V15.8 L421.7,21.4 L412.7,26.2 V23.5 H406 Q403.5,23.5 402.2,25.4 Z" fill="#dedede" stroke="#b2b2b2" stroke-width="0.9" stroke-linejoin="round"/>
<rect x="469" y="5" width="1" height="34" fill="#b8b8b8"/>
<polygon points="474,30 478.3,30 475.4,34.6 474,34.6" fill="#555"/>
<circle cx="489.1" cy="19.1" r="6.5" fill="#f2f2f2" stroke="#474747" stroke-width="1.3"/>
<line x1="494.1" y1="24.1" x2="499.70000000000005" y2="29.400000000000002" stroke="#474747" stroke-width="2"/>
<rect x="485.2" y="16.9" width="7.6" height="4.3" fill="#e8e8e8" stroke="#5a5a5a" stroke-width="1"/><rect x="486.3" y="18" width="2" height="2" fill="#444"/>
<circle cx="524.2" cy="19.1" r="6.5" fill="#f2f2f2" stroke="#474747" stroke-width="1.3"/>
<line x1="529.2" y1="24.1" x2="534.8000000000001" y2="29.400000000000002" stroke="#474747" stroke-width="2"/>
<rect x="521" y="16.7" width="5.8" height="1.3" fill="#474747"/><rect x="521" y="20" width="5.8" height="1.3" fill="#474747"/>
<circle cx="559" cy="19.1" r="6.5" fill="#f2f2f2" stroke="#474747" stroke-width="1.3"/>
<line x1="564" y1="24.1" x2="569.6" y2="29.400000000000002" stroke="#474747" stroke-width="2"/>
<rect x="556" y="18.3" width="6" height="1.5" fill="#666"/>
<circle cx="594" cy="19.1" r="6.5" fill="#f2f2f2" stroke="#474747" stroke-width="1.3"/>
<line x1="599" y1="24.1" x2="604.6" y2="29.400000000000002" stroke="#474747" stroke-width="2"/>
<rect x="591" y="18.3" width="6" height="1.5" fill="#555"/><rect x="593.25" y="16.1" width="1.5" height="6" fill="#555"/>
<circle cx="629" cy="19.1" r="6.5" fill="#f2f2f2" stroke="#474747" stroke-width="1.3"/>
<line x1="634" y1="24.1" x2="639.6" y2="29.400000000000002" stroke="#474747" stroke-width="2"/>
<rect x="624.9" y="16.7" width="8.7" height="4.9" fill="#5a5a5a"/>
<rect x="653" y="5" width="1" height="34" fill="#b8b8b8"/>
<polygon points="658.5,30 662.8,30 659.9,34.6 658.5,34.6" fill="#555"/>
<rect x="665" y="11" width="20" height="20" fill="#e2803e"/>
<text x="675" y="25.3" text-anchor="middle" font-family="&quot;Liberation Sans&quot;, sans-serif" font-size="10" font-weight="bold" fill="#fff" textLength="16" lengthAdjust="spacingAndGlyphs">ULP</text>
<polygon points="693,30 697.3,30 694.4,34.6 693,34.6" fill="#555"/>
<rect x="700" y="11" width="20" height="20" fill="#2a72c2"/>
<text x="710" y="25.3" text-anchor="middle" font-family="&quot;Liberation Sans&quot;, sans-serif" font-size="10" font-weight="bold" fill="#fff" textLength="16" lengthAdjust="spacingAndGlyphs">SCR</text>
<rect x="732" y="5" width="1" height="34" fill="#b8b8b8"/>
<polygon points="758.9,15.2 762.7,11.1 762.7,25.8 758.9,29.7" fill="#5e5e5e" stroke="#505050" stroke-width="0.6"/>
<polygon points="745.1,15.2 748.9,11.1 753.5,11.1 749.7,15.2" fill="#f2f2f2" stroke="#555" stroke-width="0.7"/>
<rect x="745.1" y="15.2" width="4.6" height="14.5" fill="#9c9c9c" stroke="#555" stroke-width="0.7"/>
<rect x="746.0" y="19.6" width="2.8" height="1.2" fill="#ececec"/>
<polygon points="749.7,15.2 753.5,11.1 758.1,11.1 754.3,15.2" fill="#f2f2f2" stroke="#555" stroke-width="0.7"/>
<rect x="749.7" y="15.2" width="4.6" height="14.5" fill="#9c9c9c" stroke="#555" stroke-width="0.7"/>
<rect x="750.6" y="19.6" width="2.8" height="1.2" fill="#ececec"/>
<polygon points="754.3,15.2 758.1,11.1 762.7,11.1 758.9,15.2" fill="#f2f2f2" stroke="#555" stroke-width="0.7"/>
<rect x="754.3" y="15.2" width="4.6" height="14.5" fill="#9c9c9c" stroke="#555" stroke-width="0.7"/>
<rect x="755.2" y="19.6" width="2.8" height="1.2" fill="#ececec"/>
<rect x="776" y="5" width="1" height="34" fill="#b8b8b8"/>
<rect x="781.5" y="9.5" width="72" height="24" fill="#fff" stroke="#a8a8a8" stroke-width="1"/>
<polygon points="786,19.5 792,19.5 789,24" fill="#555"/>
<text x="844.5" y="26.8" text-anchor="end" font-family="&quot;Liberation Sans&quot;, sans-serif" font-size="12.4" fill="#222">1/1</text>
<rect x="860.3" y="6" width="30.4" height="30.4" rx="3" fill="#c0c0c0"/>
<rect x="865.1" y="10.9" width="19.7" height="9.2" fill="#a9a9a9" stroke="#999" stroke-width="0.6"/>
<rect x="865.1" y="20.1" width="19.7" height="10.7" fill="#1e8c3c"/>
<text x="875" y="19.5" text-anchor="middle" font-family="&quot;Liberation Sans&quot;, sans-serif" font-size="10" font-weight="bold" fill="#fff" textLength="17" lengthAdjust="spacingAndGlyphs">SCH</text>
<text x="875" y="29.5" text-anchor="middle" font-family="&quot;Liberation Sans&quot;, sans-serif" font-size="10" font-weight="bold" fill="#fff" textLength="17" lengthAdjust="spacingAndGlyphs">BRD</text>
<rect x="897" y="5" width="1" height="34" fill="#b8b8b8"/>
<g stroke="#555" stroke-width="0.9"><rect x="912.4" y="11.2" width="13" height="7.2" fill="#f4f4f4"/><rect x="909.2" y="14.8" width="19.8" height="12" fill="#8a8a8a"/><rect x="909.6" y="15.2" width="19" height="6" fill="#f6f6f6" stroke="none"/><rect x="912.4" y="22.7" width="13" height="7.9" fill="#c2c2c2"/></g>
<path d="M944.5,11.5 h19 v19 h-17 l-2,-2z" fill="#777" stroke="#444" stroke-width="0.9"/>
<rect x="948.8" y="11.6" width="10.4" height="7.7" fill="#f4f4f4" stroke="#555" stroke-width="0.6"/>
<rect x="948.3" y="25" width="11.9" height="5.6" fill="#f4f4f4" stroke="#555" stroke-width="0.6"/><rect x="950" y="26.8" width="1.4" height="3.8" fill="#666"/>
<polygon points="972.2,30 976.5,30 973.6,34.6 972.2,34.6" fill="#555"/>
<path d="M979.4,11.4 h9.8 l6.7,5.3 v13.9 h-16.5z" fill="#f2f2f2" stroke="#8a8a8a" stroke-width="0.9"/>
<path d="M989.2,11.4 l6.7,5.3 h-6.7z" fill="#333"/>
<path d="M988.3,23.6 h5 v-3.2 l5.7,5.1 l-5.7,5.1 v-3.2 h-5z" fill="#5a5a5a"/>
<polygon points="425.01,53.91 425.27,51.11 428.13,51.11 428.39,53.91 430.31,54.70 432.47,52.90 434.50,54.93 432.70,57.09 433.49,59.01 436.29,59.27 436.29,62.13 433.49,62.39 432.70,64.31 434.50,66.47 432.47,68.50 430.31,66.70 428.39,67.49 428.13,70.29 425.27,70.29 425.01,67.49 423.09,66.70 420.93,68.50 418.90,66.47 420.70,64.31 419.91,62.39 417.11,62.13 417.11,59.27 419.91,59.01 420.70,57.09 418.90,54.93 420.93,52.90 423.09,54.70" fill="#f4f4f4" stroke="#4a4a4a" stroke-width="1.1" stroke-linejoin="round"/>
<circle cx="426.7" cy="60.7" r="5" fill="#5a5a5a"/>
<path d="M423.4,59.2 q1.3,-2.6 2.6,0.2 l1.2,2.4 q1.3,2.6 2.6,-0.2" fill="none" stroke="#f0f0f0" stroke-width="1.1"/>
<polygon points="458.31,53.91 458.57,51.11 461.43,51.11 461.69,53.91 463.61,54.70 465.77,52.90 467.80,54.93 466.00,57.09 466.79,59.01 469.59,59.27 469.59,62.13 466.79,62.39 466.00,64.31 467.80,66.47 465.77,68.50 463.61,66.70 461.69,67.49 461.43,70.29 458.57,70.29 458.31,67.49 456.39,66.70 454.23,68.50 452.20,66.47 454.00,64.31 453.21,62.39 450.41,62.13 450.41,59.27 453.21,59.01 454.00,57.09 452.20,54.93 454.23,52.90 456.39,54.70" fill="#f4f4f4" stroke="#4a4a4a" stroke-width="1.1" stroke-linejoin="round"/>
<circle cx="460" cy="60.7" r="5" fill="#5a5a5a"/>
<path d="M456,60.7 h2.3 v-3 h2.4 v6 h2.4 v-3 h1.9" fill="none" stroke="#f0f0f0" stroke-width="1.1"/>
<g fill="none" stroke="#404040" stroke-width="1.25"><rect x="482.6" y="58.3" width="9.5" height="5" rx="2.5" transform="rotate(-48 487.3 60.8)"/><rect x="487.8" y="52.6" width="9.5" height="5" rx="2.5" transform="rotate(-48 492.5 55.1)"/></g>
<rect x="492.9" y="64.3" width="10" height="2.8" fill="#1da84a"/><rect x="496.5" y="60.7" width="2.8" height="10" fill="#1da84a"/>
<rect x="516.1" y="51.6" width="12.6" height="18.8" rx="1.2" fill="#dedede" stroke="#555" stroke-width="0.9"/>
<rect x="518.3" y="53.2" width="9.1" height="5.4" fill="#5a5a5a"/><path d="M519,56.5 q1.8,-3 3.8,0 q2,3 3.8,0" fill="none" stroke="#eee" stroke-width="0.9"/>
<circle cx="521.5" cy="64.9" r="3.6" fill="#f4f4f4" stroke="#444" stroke-width="0.9"/><line x1="519.2" y1="62.6" x2="523.8" y2="67.2" stroke="#444" stroke-width="1"/>
<path d="M531.4,52 v10 q0,8 -2.7,8.2 M534.7,52 v10 q0,8 -5.5,8.4" fill="none" stroke="#555" stroke-width="0.9"/>
<rect x="530.8" y="53" width="1.4" height="8" fill="#666"/><rect x="534.1" y="53" width="1.4" height="8" fill="#555"/>
<rect x="549.6" y="51.6" width="12.6" height="18.8" rx="1.2" fill="#dedede" stroke="#555" stroke-width="0.9"/>
<rect x="551.6" y="53.4" width="8.6" height="5.6" fill="#fafafa" stroke="#555" stroke-width="0.9"/>
<circle cx="555" cy="64.9" r="3.6" fill="#f4f4f4" stroke="#444" stroke-width="0.9"/><line x1="552.7" y1="62.6" x2="557.3" y2="67.2" stroke="#444" stroke-width="1"/>
<path d="M564.9,52 v10 q0,8 -2.7,8.2 M568.2,52 v10 q0,8 -5.5,8.4" fill="none" stroke="#555" stroke-width="0.9"/>
<rect x="564.3" y="53" width="1.4" height="8" fill="#666"/><rect x="567.6" y="53" width="1.4" height="8" fill="#555"/>
<circle cx="590.2" cy="58.8" r="6.5" fill="none" stroke="#4a4a4a" stroke-width="1.2"/><line x1="595.2" y1="63.8" x2="600.8" y2="69.6" stroke="#4a4a4a" stroke-width="2"/>
<path d="M586,58.5 C586.5,56.8 587,55.9 587.8,55.9 C589.5,55.9 590.5,62.7 592.5,62.7 C593.5,62.7 594.3,60.5 594.7,59.1" fill="none" stroke="#4a4a4a" stroke-width="1.2"/>
<line x1="625.4" y1="51.1" x2="625.4" y2="70.7" stroke="#9a9a9a" stroke-width="1"/><line x1="616" y1="60.8" x2="634.2" y2="60.8" stroke="#cfcfcf" stroke-width="1.6"/>
<path d="M616.1,60.7 C617.5,55 619,53.4 620.3,53.4 C622.5,53.4 624,57.5 625.4,60.7 C626.8,64 628,68.4 629.9,68.4 C631.5,68.4 633,65 634.1,61" fill="none" stroke="#333" stroke-width="1.3"/>
<rect x="647" y="47" width="1" height="30" fill="#b8b8b8"/>
<rect x="651" y="47" width="1" height="30" fill="#b8b8b8"/>
<rect x="659" y="42" width="1" height="38" fill="#d0d0d0"/>
<rect x="661.5" y="49.5" width="182" height="25" fill="#fff" stroke="#a8a8a8" stroke-width="1"/>
<polygon points="666,60 672,60 669,64.5" fill="#555"/>
<text x="807.5" y="66.7" text-anchor="end" font-family="&quot;Liberation Sans&quot;, sans-serif" font-size="12.4" fill="#222">Nets 91</text>
<rect x="815" y="51.7" width="20" height="20" fill="#3cba8a"/>
<text x="863.5" y="66.8" font-family="&quot;Liberation Sans&quot;, sans-serif" font-size="12.4" fill="#222" textLength="32" lengthAdjust="spacingAndGlyphs">Layer:</text>
<rect x="903" y="44" width="1" height="35" fill="#c8c8c8"/>
<rect x="909.5" y="46.3" width="30.5" height="30.2" rx="3" fill="#d8d8d8"/>
<path d="M914,52.8 h19.5 v1.5 l-7,6 v7.5 q0,1.5 -2.75,1.5 q-2.75,0 -2.75,-1.5 v-7.5 l-7,-6z" fill="#5f5f5f"/>
<polygon points="941.2,70 945.5,70 942.6,74.6 941.2,74.6" fill="#555"/>
<g stroke="#444" stroke-width="1.3"><line x1="947.3" y1="56.5" x2="966.4" y2="56.5"/><line x1="947.3" y1="61.3" x2="966.4" y2="61.3"/><line x1="947.3" y1="66.3" x2="966.4" y2="66.3"/><line x1="952.5" y1="50.9" x2="952.5" y2="70.7"/><line x1="957.5" y1="50.9" x2="957.5" y2="70.7"/><line x1="962.5" y1="50.9" x2="962.5" y2="70.7"/></g>
<polygon points="974,70 978.3,70 975.4,74.6 974,74.6" fill="#555"/>
<path d="M981,70 l9,-9 h14 l-9,9z" fill="#f4f4f4" stroke="#999" stroke-width="1"/>
<path d="M981,65 l9,-9 h14 l-9,9z" fill="#f4f4f4" stroke="#999" stroke-width="1"/>
<path d="M981,60.3 l8.6,-9 h14 l-8.6,9z" fill="#7a7a7a" stroke="#555" stroke-width="1"/>
<defs><filter id="sh" x="-10%" y="-30%" width="120%" height="160%"><feGaussianBlur stdDeviation="1.6"/></filter></defs>
<rect x="726.5" y="34.5" width="150" height="27" fill="#000" opacity="0.18" filter="url(#sh)"/>
<g opacity="0.93"><rect x="725.3" y="33.2" width="148.7" height="26.5" rx="1" fill="#6a6a6a"/></g>
<text x="731.9" y="46.8" font-family="&quot;Liberation Sans&quot;, sans-serif" font-size="12.4" fill="#fff" textLength="133" lengthAdjust="spacingAndGlyphs">Generate/switch to board</text>
</svg>
</div>
</body></html>
